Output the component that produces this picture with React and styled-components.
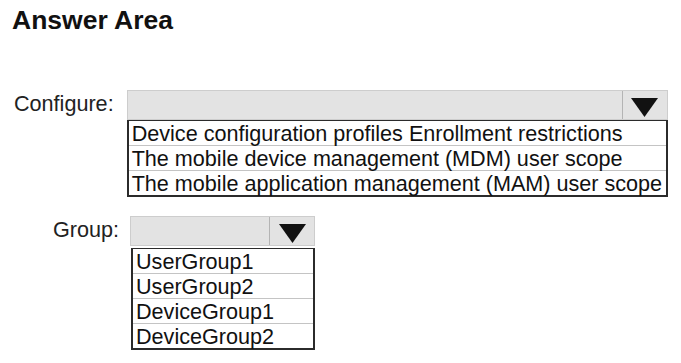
import React from 'react';
import styled, { createGlobalStyle } from 'styled-components';

const GlobalStyle = createGlobalStyle`
  body {
    margin: 0;
    background: #fff;
    font-family: "Liberation Sans", Arial, sans-serif;
  }
`;

const Page = styled.div`
  width: 681px;
  height: 363px;
  background: #fff;
  overflow: hidden;
`;

const Title = styled.h1`
  margin: 5px 0 0 12px;
  font-size: 26.5px;
  font-weight: bold;
  color: #111;
  line-height: 30px;
`;

const Row = styled.div`
  display: flex;
  align-items: flex-start;
  gap: ${({ gap }) => gap}px;
  margin-left: ${({ left }) => left}px;
  margin-top: ${({ top }) => top}px;
`;

const Label = styled.span`
  font-size: 21.6px;
  color: #222;
  line-height: 30px;
  margin-top: -1px;
`;

const Field = styled.div`
  display: flex;
  flex-direction: column;
  width: ${({ width }) => width}px;
`;

const SelectBox = styled.div`
  display: flex;
  height: 30px;
  box-sizing: border-box;
  background: #e3e3e3;
  border: 1px solid #cdcdcd;
`;

const SelectValue = styled.div`
  flex: 1;
`;

const ArrowButton = styled.div`
  width: ${({ width }) => width}px;
  border-left: 1px solid #b4b4b4;
  display: flex;
  justify-content: center;
  padding-top: 7px;
  box-sizing: border-box;
`;

const OptionList = styled.ul`
  list-style: none;
  margin: ${({ gap }) => gap}px 0 0 ${({ shift }) => shift}px;
  padding: 0;
  border: 2px solid #2b2b2b;
  border-top-width: 1.5px;
  background: #fff;
`;

const Option = styled.li`
  height: 25px;
  box-sizing: border-box;
  padding-left: 3px;
  font-size: 21.6px;
  line-height: 25px;
  color: #111;
  white-space: nowrap;
  border-top: 1px solid #c4c4c4;

  &:first-child {
    border-top: none;
    height: 24px;
  }
`;

const Triangle = () => (
  <svg width="27" height="19" viewBox="0 0 27 19">
    <polygon points="0,0 27,0 13.5,19" fill="#111" />
  </svg>
);

const Dropdown = ({ width, buttonWidth, listShift = 0, listGap = 0, options }) => (
  <Field width={width}>
    <SelectBox>
      <SelectValue />
      <ArrowButton width={buttonWidth}>
        <Triangle />
      </ArrowButton>
    </SelectBox>
    <OptionList shift={listShift} gap={listGap}>
      {options.map(o => (
        <Option key={o}>{o}</Option>
      ))}
    </OptionList>
  </Field>
);

export default function App() {
  return (
    <Page>
      <GlobalStyle />
      <Title>Answer Area</Title>
      <Row left={14} gap={13} top={55}>
        <Label>Configure:</Label>
        <Dropdown
          width={541}
          buttonWidth={45}
          options={[
            'Device configuration profiles Enrollment restrictions',
            'The mobile device management (MDM) user scope',
            'The mobile application management (MAM) user scope',
          ]}
        />
      </Row>
      <Row left={53} gap={11} top={19}>
        <Label>Group:</Label>
        <Dropdown
          width={185}
          buttonWidth={45}
          listShift={1}
          listGap={2}
          options={['UserGroup1', 'UserGroup2', 'DeviceGroup1', 'DeviceGroup2']}
        />
      </Row>
    </Page>
  );
}
